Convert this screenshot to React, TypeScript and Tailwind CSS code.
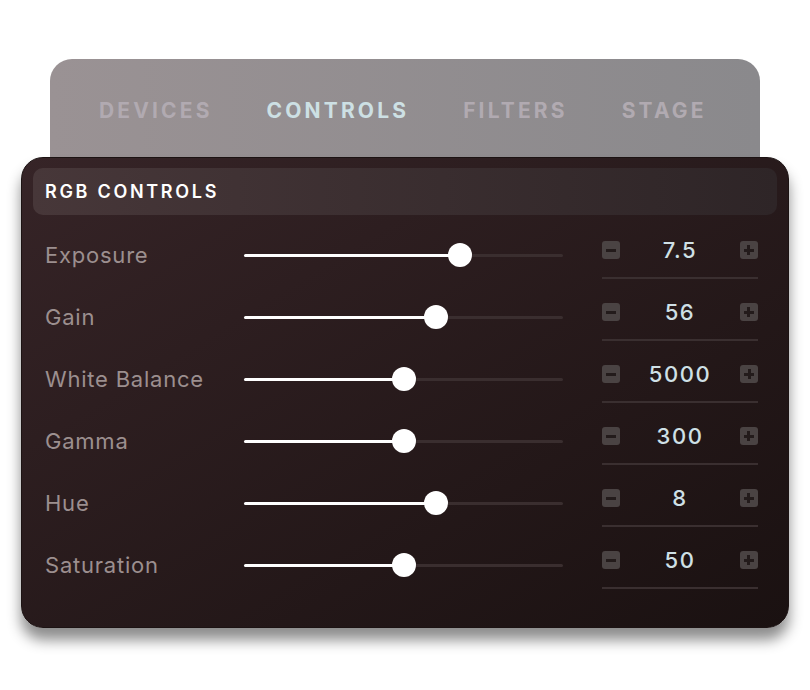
import React from 'react'

const tabs = [
  { name: 'DEVICES', active: false },
  { name: 'CONTROLS', active: true },
  { name: 'FILTERS', active: false },
  { name: 'STAGE', active: false },
]

const rows = [
  { label: 'Exposure', value: '7.5', pct: 67.7 },
  { label: 'Gain', value: '56', pct: 60.2 },
  { label: 'White Balance', value: '5000', pct: 50.2 },
  { label: 'Gamma', value: '300', pct: 50.2 },
  { label: 'Hue', value: '8', pct: 60.2 },
  { label: 'Saturation', value: '50', pct: 50.2 },
]

function Slider({ pct }: { pct: number }) {
  return (
    <div className="relative w-[319px] h-[24px] flex items-center">
      <div className="absolute left-0 right-0 h-[3px] bg-[#3a2e2f] rounded-full" />
      <div className="absolute left-0 h-[3px] bg-white rounded-full" style={{ width: `${pct}%` }} />
      <div
        className="absolute w-[24px] h-[24px] -ml-[12px] rounded-full bg-white"
        style={{ left: `${pct}%` }}
      />
    </div>
  )
}

function StepButton({ plus }: { plus?: boolean }) {
  return (
    <div className="w-[18px] h-[18px] rounded-[3px] bg-[#4a4343] relative flex items-center justify-center">
      <div className="w-[10px] h-[3px] bg-[#231b1b]" />
      {plus && <div className="absolute w-[3px] h-[10px] bg-[#231b1b]" />}
    </div>
  )
}

export default function App() {
  return (
    <div className="w-[810px] h-[690px] bg-white pt-[59px]" style={{ fontFamily: 'Inter, "Liberation Sans", sans-serif' }}>
      {/* Tabs panel */}
      <div className="mx-[50px] h-[120px] rounded-t-[22px] bg-gradient-to-r from-[#9a9294] to-[#8a898c] pl-[49px] pt-[39px]">
        <div className="flex items-center gap-[54px]">
          {tabs.map((t) => (
            <span
              key={t.name}
              className={`text-[21px] font-bold tracking-[0.15em] leading-[26px] ${t.active ? 'text-[#cde0e4]' : 'text-[#b1aab1]'}`}
            >
              {t.name}
            </span>
          ))}
        </div>
      </div>

      {/* Controls panel */}
      <div className="relative mx-[21px] -mt-[22px] h-[471px] rounded-[22px] bg-gradient-to-br from-[#362427] to-[#1a1111] border border-[#1c1313] shadow-[0_12px_14px_rgba(0,0,0,0.45)] px-[11px] pt-[10px]">
        <div className="h-[47px] rounded-[10px] bg-gradient-to-r from-[#473739] to-[#2e2527] flex items-center pl-[12px]">
          <span className="text-[18px] font-semibold tracking-[0.15em] text-white">RGB CONTROLS</span>
        </div>

        <div className="mt-[9px] pl-[12px] pr-[19px]">
          {rows.map((r) => (
            <div key={r.label} className="h-[62px] flex items-center">
              <span className="w-[199px] text-[22px] tracking-[0.035em] text-[#9c8f8f]">{r.label}</span>
              <Slider pct={r.pct} />
              <div className="ml-auto self-start w-[156px] flex flex-col">
                <div className="mt-[17px] h-[18px] flex items-center justify-between">
                  <StepButton />
                  <span className="text-[22px] font-medium tracking-[0.07em] text-[#cfe0e6] leading-[18px]">{r.value}</span>
                  <StepButton plus />
                </div>
                <div className="mt-[18px] h-[2px] bg-[#3a2f30]" />
              </div>
            </div>
          ))}
        </div>
      </div>
    </div>
  )
}
